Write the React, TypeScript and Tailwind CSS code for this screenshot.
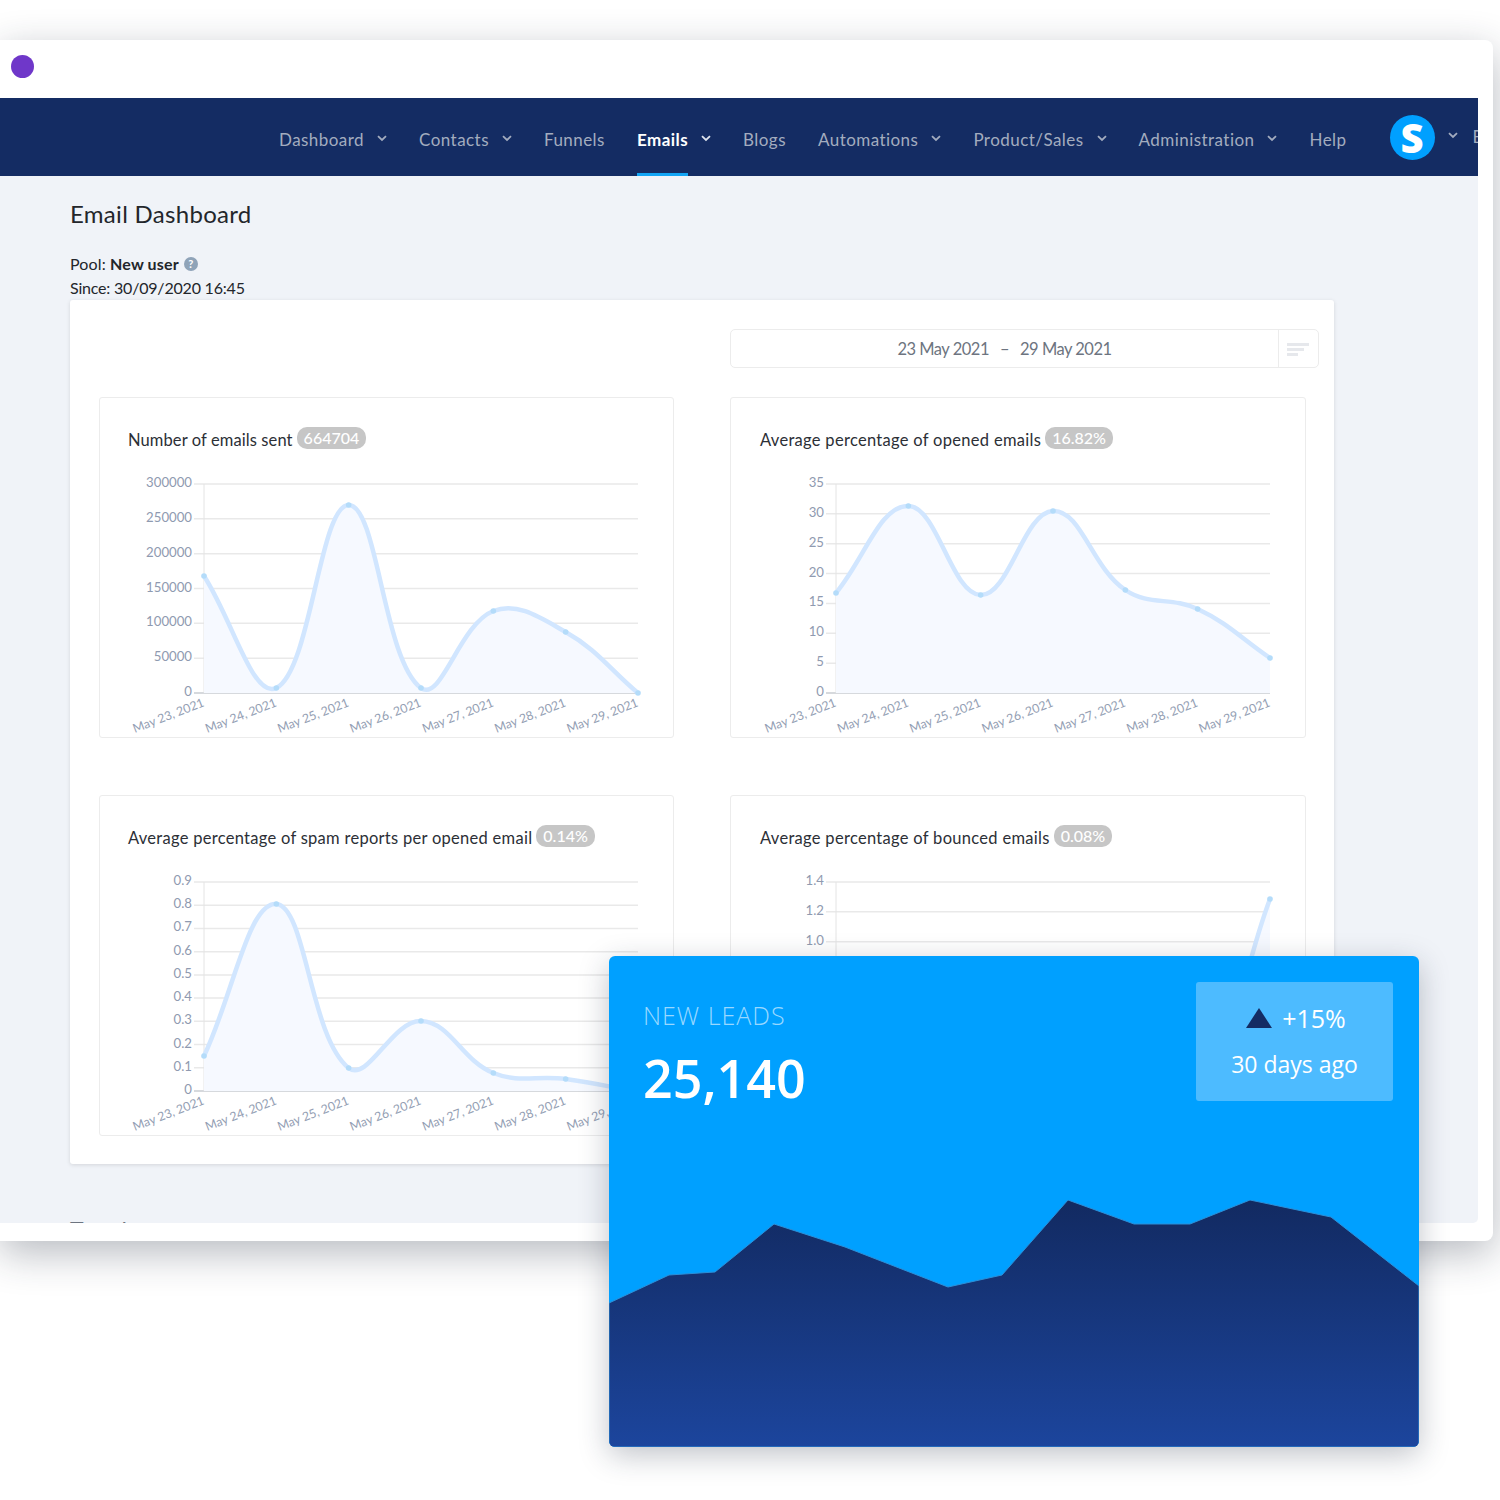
const navItems = [
  { label: "Dashboard", caret: true },
  { label: "Contacts", caret: true },
  { label: "Funnels" },
  { label: "Emails", caret: true, active: true },
  { label: "Blogs" },
  { label: "Automations", caret: true },
  { label: "Product/Sales", caret: true },
  { label: "Administration", caret: true },
  { label: "Help" },
];

const days = ["May 23, 2021", "May 24, 2021", "May 25, 2021", "May 26, 2021", "May 27, 2021", "May 28, 2021", "May 29, 2021"];

const charts = [
  {
    title: "Number of emails sent",
    titleClass: "tracking-[0.1px]",
    badge: "664704",
    ticks: ["300000", "250000", "200000", "150000", "100000", "50000", "0"],
    left: 104,
    points: [105, 217, 34, 217, 140, 161, 222],
  },
  {
    title: "Average percentage of opened emails",
    titleClass: "tracking-[0.3px]",
    badge: "16.82%",
    ticks: ["35", "30", "25", "20", "15", "10", "5", "0"],
    left: 105,
    points: [122, 35, 124, 40, 119, 138, 187],
  },
  {
    title: "Average percentage of spam reports per opened email",
    titleClass: "tracking-[0.28px]",
    badge: "0.14%",
    ticks: ["0.9", "0.8", "0.7", "0.6", "0.5", "0.4", "0.3", "0.2", "0.1", "0"],
    left: 104,
    points: [187, 35, 199, 152, 204, 210, 223],
  },
  {
    title: "Average percentage of bounced emails",
    titleClass: "tracking-[0.3px]",
    badge: "0.08%",
    ticks: ["1.4", "1.2", "1.0", "0.8", "0.6", "0.4", "0.2", "0"],
    left: 105,
    points: [222, 222, 222, 222, 222, 222, 30],
  },
];

// same curve maths as chart.js with tension 0.4
function smoothPath(pts: { x: number; y: number }[]) {
  const t = 0.4;
  const cps = pts.map((p, i) => {
    const prev = pts[i - 1] ?? p;
    const next = pts[i + 1] ?? p;
    const d01 = Math.hypot(p.x - prev.x, p.y - prev.y);
    const d12 = Math.hypot(next.x - p.x, next.y - p.y);
    const total = d01 + d12 || 1;
    const fa = (t * d01) / total;
    const fb = (t * d12) / total;
    return {
      inX: p.x - fa * (next.x - prev.x),
      inY: p.y - fa * (next.y - prev.y),
      outX: p.x + fb * (next.x - prev.x),
      outY: p.y + fb * (next.y - prev.y),
    };
  });
  let d = `M${pts[0].x} ${pts[0].y}`;
  for (let i = 1; i < pts.length; i++) {
    d += ` C${cps[i - 1].outX} ${cps[i - 1].outY} ${cps[i].inX} ${cps[i].inY} ${pts[i].x} ${pts[i].y}`;
  }
  return d;
}

function LineChart({ ticks, left, points }: { ticks: string[]; left: number; points: number[] }) {
  const top = 13;
  const bottom = 222;
  const right = left + 434;
  const step = (bottom - top) / (ticks.length - 1);
  const pts = points.map((y, i) => ({ x: left + (i * 434) / 6, y }));
  const line = smoothPath(pts);

  return (
    <svg width="574" height="267" className="block">
      {ticks.map((tick, i) => {
        const y = top + i * step;
        return (
          <g key={tick}>
            <line x1={left - 10} x2={right} y1={y} y2={y} stroke={i === ticks.length - 1 ? "#c9ccd2" : "#e9e9e9"} strokeWidth="1.5" />
            <text x={left - 12} y={y + 3} textAnchor="end" fontSize="13.2" fill="#8f9ab0">
              {tick}
            </text>
          </g>
        );
      })}
      <line x1={left} x2={left} y1={top} y2={bottom} stroke="#e4e4e4" />
      <path d={`${line} L${right} ${bottom} L${left} ${bottom} Z`} fill="#f6f9ff" />
      <path d={line} fill="none" stroke="#d1e6ff" strokeWidth="4.5" />
      {pts.map((p) => (
        <circle key={p.x} cx={p.x} cy={p.y} r="2.8" fill="#b4dcfa" />
      ))}
      {pts.map((p, i) => (
        <text key={days[i]} x={p.x + 1} y={bottom + 13} textAnchor="end" fontSize="12.3" fill="#939eb3" transform={`rotate(-21 ${p.x + 1} ${bottom + 13})`}>
          {days[i]}
        </text>
      ))}
    </svg>
  );
}

function ChartCard({ title, titleClass, badge, ticks, left, points }: (typeof charts)[number]) {
  return (
    <div className="h-[341px] overflow-hidden rounded-[3px] border border-[#ececec] bg-white">
      <div className={`flex h-[73px] items-start gap-[4px] pt-[30px] text-[16.5px] leading-[24px] text-[#2c2f36] ${left === 105 ? "pl-[29px]" : "pl-[28px]"}`}>
        <span className={titleClass}>{title}</span>
        <span className="-mt-[1px] rounded-[10px] bg-[#c6c6c6] px-[7px] text-[16px] font-medium leading-[22px] text-white">{badge}</span>
      </div>
      <LineChart ticks={ticks} left={left} points={points} />
    </div>
  );
}

function Caret({ color = "#a3acbf" }: { color?: string }) {
  return (
    <svg width="10" height="7" viewBox="0 0 10 7" className="ml-[13px] mb-[3px]">
      <path d="M1 1.2 L5 5 L9 1.2" fill="none" stroke={color} strokeWidth="1.8" />
    </svg>
  );
}

export default function App() {
  return (
    <div className="relative h-[1500px] w-[1500px] overflow-hidden bg-white pt-[40px] font-['Lato',sans-serif]">
      <div className="h-[1201px] w-[1493px] rounded-r-[8px] bg-white pb-[18px] shadow-[0_12px_40px_rgba(30,40,60,0.32)]">
        <div className="flex h-[58px] items-center pb-[6px] pl-[11px]">
          <div className="h-[23px] w-[23px] rounded-full bg-[#6f37c9]" />
        </div>

        <div className="flex h-[78px] w-[1478px] overflow-hidden bg-[#142c63] pl-[279px]">
          <nav className="flex gap-[32px] text-[17px] tracking-[0.45px] text-[#a3acbf]">
            {navItems.map((item) => (
              <a key={item.label} className={`relative flex items-center pt-[5px] ${item.active ? "font-bold text-white" : ""}`}>
                {item.label}
                {item.caret && <Caret color={item.active ? "#dfe4ee" : "#a3acbf"} />}
                {item.active && <span className="absolute bottom-0 left-0 h-[3px] w-[51px] bg-[#12a5f5]" />}
              </a>
            ))}
          </nav>
          <div className="ml-[43px] flex h-full shrink-0 items-start pt-[17px]">
            <div className="flex h-[45px] w-[45px] items-center justify-center rounded-full bg-[#00a0ff] text-[40px] font-extrabold leading-none text-white">
              <span className="font-['Open_Sans',sans-serif]">S</span>
            </div>
            <div className="mt-[17px]">
              <Caret />
            </div>
            <span className="ml-[15px] mt-[9px] text-[17px] text-[#a3acbf]">E</span>
          </div>
        </div>

        <div className="h-[1047px] w-[1478px] overflow-hidden rounded-br-[5px] bg-[#f0f3f8] pl-[70px] text-[#23262b]">
          <h1 className="pt-[23px] text-[24px] font-normal leading-[30px] tracking-[0.3px]">Email Dashboard</h1>
          <div className="pt-[23px] text-[16px] leading-[24px]">
            <div className="flex items-center gap-[5px]">
              <span className="tracking-[0.15px]">
                Pool: <b className="font-bold">New user</b>
              </span>
              <span className="flex h-[14px] w-[14px] items-center justify-center rounded-full bg-[#8fa3b8] text-[11px] font-bold text-white">?</span>
            </div>
            <div className="tracking-[-0.2px]">Since: 30/09/2020 16:45</div>
          </div>

          <div className="h-[864px] w-[1264px] rounded-[3px] bg-white pt-[29px] shadow-[0_1px_4px_rgba(0,0,0,0.12)]">
            <div className="flex justify-end pr-[15px]">
              <div className="flex h-[39px] w-[589px] rounded-[5px] border border-[#ececec]">
                <div className="flex flex-1 items-center justify-center gap-[11px] pt-[1px] text-[16.5px] tracking-[-0.5px] text-[#6d7480]">
                  <span>23 May 2021</span>
                  <span>–</span>
                  <span>29 May 2021</span>
                </div>
                <div className="flex w-[40px] flex-col items-start gap-[2px] border-l border-[#ececec] pl-[8px] pt-[13px]">
                  <span className="h-[3px] w-[22px] bg-[#e6e8ec]" />
                  <span className="h-[3px] w-[17px] bg-[#e6e8ec]" />
                  <span className="h-[3px] w-[11px] bg-[#e6e8ec]" />
                </div>
              </div>
            </div>
            <div className="ml-[29px] mt-[29px] grid w-[1207px] grid-cols-[575px_576px] gap-x-[56px] gap-y-[57px]">
              {charts.map((chart) => (
                <ChartCard key={chart.title} {...chart} />
              ))}
            </div>
          </div>

          <h2 className="pt-[51px] text-[23px] font-normal leading-[30px] text-[#6d7480]">Trends</h2>
        </div>
      </div>

      <div className="absolute left-[609px] top-[956px] flex h-[491px] w-[810px] flex-col overflow-hidden rounded-[6px] bg-[#00a0ff] shadow-[0_8px_30px_rgba(30,40,60,0.28)] font-['Open_Sans',sans-serif]">
        <div className="flex h-[244px] justify-between pl-[34px] pr-[26px] pt-[26px]">
          <div>
            <div className="pt-[15px] text-[25px] font-light leading-[36px] tracking-[1px] text-[#99d8ff]">NEW LEADS</div>
            <div className="pt-[10px] text-[52px] font-semibold leading-[70px] text-white">25,140</div>
          </div>
          <div className="flex h-[119px] w-[197px] flex-col items-center rounded-[3px] bg-[#4dbbff] pt-[18px] text-white">
            <div className="flex items-center gap-[10px] pl-[3px] text-[25px] leading-[36px]">
              <svg width="26" height="20" viewBox="0 0 26 20">
                <path d="M13 0 L26 20 L0 20 Z" fill="#142c63" />
              </svg>
              +15%
            </div>
            <div className="pt-[10px] text-[23px] leading-[36px]">30 days ago</div>
          </div>
        </div>
        <svg width="810" height="247" className="block">
          <defs>
            <linearGradient id="leads" x1="0" x2="0" y1="0" y2="1">
              <stop offset="0" stopColor="#122a61" />
              <stop offset="1" stopColor="#1c459d" />
            </linearGradient>
          </defs>
          <path
            d="M0 103 L60 75 L106 72 L165 24 L236 47 L339 87 L393 75 L459 0 L525 24 L581 24 L641 0 L722 17 L810 86 L810 247 L0 247 Z"
            fill="url(#leads)"
            stroke="#2c8fd8"
            strokeWidth="1"
          />
        </svg>
      </div>
    </div>
  );
}
